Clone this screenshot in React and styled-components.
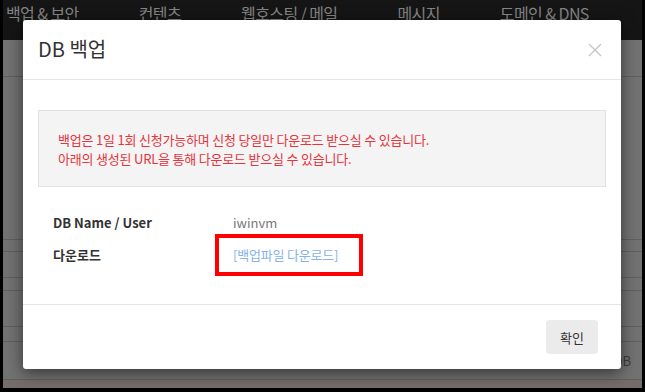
import React from 'react';
import styled, { createGlobalStyle } from 'styled-components';

const GlobalStyle = createGlobalStyle`
  html, body {
    margin: 0;
    padding: 0;
    background: #000;
  }
  body {
    font-family: "Noto Sans CJK KR", "Noto Sans", sans-serif;
  }
`;

const Frame = styled.div`
  width: 645px;
  height: 392px;
  box-sizing: border-box;
  padding: 0 3px 4px 3px;
  background: #000;
  overflow: hidden;
`;

const Screen = styled.div`
  position: relative;
  height: 100%;
  display: flex;
  flex-direction: column;
  overflow: hidden;
`;

const NavBar = styled.div`
  height: 40px;
  flex-shrink: 0;
  background: #151515;
  display: flex;
  align-items: flex-start;
  gap: 60px;
  padding: 2px 0 0 3px;
  box-sizing: border-box;

  span {
    color: #858585;
    font-size: 16px;
    line-height: 22px;
    letter-spacing: -0.6px;
    white-space: nowrap;
  }
`;

const Backdrop = styled.div`
  flex: 1;
  background: #727272;
  display: flex;
  flex-direction: column;
`;

const BackRow = styled.div`
  height: ${(p) => p.$h}px;
  flex-shrink: 0;
  border-bottom: 1px solid #5f5f5f;
  box-sizing: border-box;
  display: flex;
  align-items: center;
  justify-content: flex-end;
  padding-right: 11px;
  color: #3c3c3c;
  font-size: 13px;
`;

const BottomStrip = styled.div`
  height: 8px;
  flex-shrink: 0;
  background: #766c6c;
`;

const Modal = styled.div`
  position: absolute;
  left: 20px;
  top: 20px;
  width: 598px;
  height: 349px;
  background: #fff;
  border-radius: 3px;
  box-shadow: 0 4px 16px rgba(0, 0, 0, 0.55);
  display: flex;
  flex-direction: column;
`;

const Header = styled.div`
  height: 60px;
  box-sizing: border-box;
  border-bottom: 1px solid #e5e5e5;
  display: flex;
  align-items: center;
  justify-content: space-between;
  padding: 0 19px 0 15px;
`;

const Title = styled.h4`
  margin: 0;
  font-size: 20px;
  font-weight: 400;
  color: #333;
  line-height: 1;
  margin-top: -2px;
`;

const CloseButton = styled.button`
  border: 0;
  background: none;
  padding: 0;
  width: 14px;
  height: 14px;
  display: flex;
  cursor: pointer;
`;

const Body = styled.div`
  flex: 1;
  padding: 30px 15px 0;
`;

const Alert = styled.div`
  height: 77px;
  box-sizing: border-box;
  border: 1px solid #e2e2e2;
  background: #f4f4f4;
  padding: 0 19px;
  display: flex;
  flex-direction: column;
  justify-content: center;
  color: #e5343d;
  font-size: 13px;
  line-height: 19px;
  letter-spacing: -0.2px;
`;

const InfoList = styled.div`
  margin-top: 19px;
  padding-left: 15px;
`;

const InfoRow = styled.div`
  display: flex;
  height: 32px;
  align-items: center;
  font-size: 13px;
`;

const Label = styled.div`
  width: 180px;
  color: #333;
  font-weight: 700;
`;

const Value = styled.div`
  color: #777;
`;

const DownloadLink = styled.a`
  position: relative;
  display: inline-block;
  line-height: 18px;
  font-size: 13px;
  letter-spacing: -0.2px;
  color: #86b3ea;
  text-decoration: none;
  cursor: pointer;

  &::after {
    content: '';
    position: absolute;
    left: -18px;
    top: -12px;
    width: 148px;
    height: 42px;
    box-sizing: border-box;
    border: 4px solid #ff0000;
  }
`;

const Footer = styled.div`
  height: 65px;
  box-sizing: border-box;
  border-top: 1px solid #e5e5e5;
  display: flex;
  align-items: center;
  justify-content: flex-end;
  padding: 0 23px;
`;

const ConfirmButton = styled.button`
  width: 52px;
  height: 34px;
  border: 0;
  border-radius: 4px;
  background: #ebebeb;
  color: #333;
  font-family: inherit;
  font-size: 13px;
  cursor: pointer;
`;

const navItems = ['백업 & 보안', '컨텐츠', '웹호스팅 / 메일', '메시지', '도메인 & DNS'];
const backRows = [37, 163, 12, 26, 13, 36, 15];

export default function App() {
  return (
    <Frame>
      <GlobalStyle />
      <Screen>
        <NavBar>
          {navItems.map((item) => (
            <span key={item}>{item}</span>
          ))}
        </NavBar>
        <Backdrop>
          {backRows.map((h, i) => (
            <BackRow key={i} $h={h} />
          ))}
          <BackRow $h={38}>DB</BackRow>
        </Backdrop>
        <BottomStrip />

        <Modal>
          <Header>
            <Title>DB 백업</Title>
            <CloseButton aria-label="닫기">
              <svg width="14" height="14" viewBox="0 0 14 14">
                <path d="M1 1L13 13M13 1L1 13" stroke="#c6c6c6" strokeWidth="1.4" fill="none" />
              </svg>
            </CloseButton>
          </Header>
          <Body>
            <Alert>
              <div>백업은 1일 1회 신청가능하며 신청 당일만 다운로드 받으실 수 있습니다.</div>
              <div>아래의 생성된 URL을 통해 다운로드 받으실 수 있습니다.</div>
            </Alert>
            <InfoList>
              <InfoRow>
                <Label>DB Name / User</Label>
                <Value>iwinvm</Value>
              </InfoRow>
              <InfoRow>
                <Label>다운로드</Label>
                <Value>
                  <DownloadLink>[백업파일 다운로드]</DownloadLink>
                </Value>
              </InfoRow>
            </InfoList>
          </Body>
          <Footer>
            <ConfirmButton>확인</ConfirmButton>
          </Footer>
        </Modal>
      </Screen>
    </Frame>
  );
}
